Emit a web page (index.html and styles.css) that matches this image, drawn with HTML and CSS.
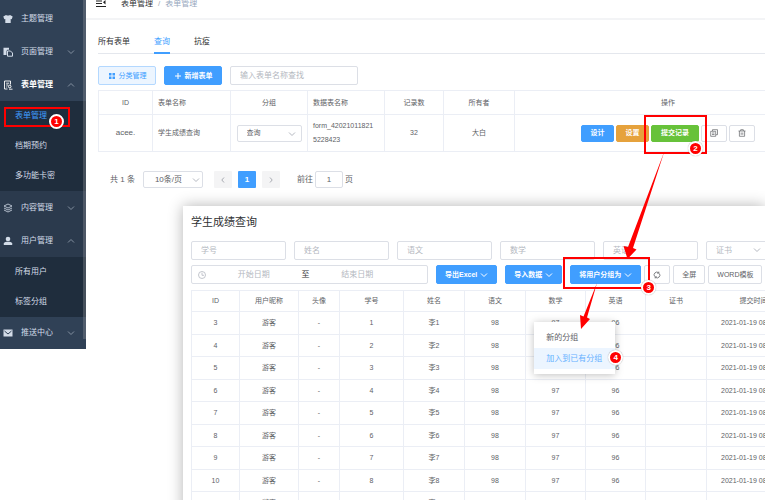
FILE: index.html
```
<!DOCTYPE html>
<html lang="zh-CN">
<head>
  <meta charset="UTF-8" />
  <title>表单管理</title>
  <link rel="stylesheet" href="styles.css">
</head>
<body>

  <!-- shared icons -->
  <svg class="sprite" aria-hidden="true">
    <symbol id="down" viewBox="0 0 8 8"><path d="M1 2.5l3 3 3-3" fill="none" stroke="currentColor"/></symbol>
    <symbol id="up" viewBox="0 0 8 8"><path d="M1 5.5l3-3 3 3" fill="none" stroke="currentColor"/></symbol>
    <symbol id="prev" viewBox="0 0 8 8"><path d="M5 1.5L2.8 4 5 6.5" fill="none" stroke="currentColor"/></symbol>
    <symbol id="next" viewBox="0 0 8 8"><path d="M3 1.5L5.2 4 3 6.5" fill="none" stroke="currentColor"/></symbol>
  </svg>

  <div class="app">
    <nav class="sidebar">
      <a class="item" href="#">
        <svg class="icon" viewBox="0 0 10 10"><path d="M3 1L.3 2.500 1.300 5.200l1-.3V9h5.400V4.900l1 .3 1-2.700L7 1Q5 2.200 3 1z" fill="currentColor"/></svg>
        <span>主题管理</span>
      </a>
      <a class="item" href="#">
        <svg class="icon" viewBox="0 0 10 10"><path d="M.5.8h5.500v2H4.300L3.500 4v4H.5z" fill="currentColor"/><path d="M4.500 4h3l2 2v3.200h-5z" fill="none" stroke="currentColor"/></svg>
        <span>页面管理</span>
        <svg class="arrow"><use href="#down"/></svg>
      </a>
      <a class="item open" href="#">
        <svg class="icon" viewBox="0 0 10 10"><path d="M7.500 4.500V1H1.500v8h3M3.200 3.200h3M3.200 5h2M3.200 7h1M6 9.200h3.500" fill="none" stroke="currentColor" stroke-width=".9"/><circle cx="6.700" cy="6.500" r="1.300" fill="none" stroke="currentColor"/></svg>
        <span>表单管理</span>
        <svg class="arrow"><use href="#up"/></svg>
      </a>
      <div class="submenu">
        <a class="current" href="#">表单管理
          <i class="mark mark-menu"></i><b class="badge badge-menu">1</b>
        </a>
        <a href="#">档期预约</a>
        <a href="#">多功能卡密</a>
      </div>
      <a class="item dim" href="#">
        <svg class="icon" viewBox="0 0 10 10"><path d="M5 1l4 2-4 2-4-2zM1 5l4 2 4-2M1 7l4 2 4-2" fill="none" stroke="currentColor" stroke-width=".8"/></svg>
        <span>内容管理</span>
        <svg class="arrow"><use href="#down"/></svg>
      </a>
      <a class="item dim" href="#">
        <svg class="icon" viewBox="0 0 10 10"><circle cx="5" cy="3" r="2.300" fill="currentColor"/><path d="M.8 9V7.500Q1.200 5.800 3.500 5.700h3Q8.800 5.800 9.200 7.500V9z" fill="currentColor"/></svg>
        <span>用户管理</span>
        <svg class="arrow"><use href="#up"/></svg>
      </a>
      <div class="submenu">
        <a href="#">所有用户</a>
        <a href="#">标签分组</a>
      </div>
      <a class="item" href="#">
        <svg class="icon" viewBox="0 0 10 10"><rect x=".5" y="1.500" width="9" height="7" fill="currentColor"/><path d="M1.500 3L5 6l3.500-3" fill="none" stroke="#304156"/></svg>
        <span>推送中心</span>
        <svg class="arrow"><use href="#down"/></svg>
      </a>
      <div class="scrollbar"></div>
    </nav>

    <main class="main">
      <header class="crumbs">
        <svg class="hamburger" viewBox="0 0 10 8"><path d="M0 1h6M0 3.500h6M0 6.500h10" stroke="#222" fill="none"/><path d="M9.500 0v4.500L7 2.200z" fill="#222"/></svg>
        <span>表单管理</span><i>/</i><a href="#">表单管理</a>
      </header>

      <div class="content">
        <div class="tabs">
          <a href="#">所有表单</a>
          <a class="active" href="#">查询</a>
          <a href="#">抗疫</a>
        </div>

        <div class="toolbar">
          <button class="btn plain wide"><svg class="mini" viewBox="0 0 8 8"><path d="M1 1h2.500v2.500H1zM4.500 1H7v2.500H4.500zM1 4.500h2.500V7H1zM4.500 4.500H7V7H4.500z" fill="currentColor"/></svg>分类管理</button>
          <button class="btn primary wide"><svg class="mini" viewBox="0 0 8 8"><path d="M4 1v6M1 4h6" stroke="currentColor"/></svg>新增表单</button>
          <input class="input search" type="text" placeholder="输入表单名称查找" aria-label="输入表单名称查找">
        </div>

        <table class="table forms">
          <colgroup><col class="w54"><col class="w78"><col class="w77"><col class="w77"><col class="w59"><col class="w71"><col></colgroup>
          <thead>
            <tr><th>ID</th><th class="left">表单名称</th><th>分组</th><th class="left">数据表名称</th><th>记录数</th><th>所有者</th><th>操作</th></tr>
          </thead>
          <tbody>
            <tr>
              <td class="big">acee.</td>
              <td class="left">学生成绩查询</td>
              <td><span class="select group"><select aria-label="分组"><option>查询</option></select><svg><use href="#down"/></svg></span></td>
              <td class="left">form_42021011821<br>5228423</td>
              <td>32</td>
              <td>大白</td>
              <td>
                <div class="actions">
                  <button class="btn primary">设计</button>
                  <button class="btn warning">设置</button>
                  <span class="anchor"><button class="btn success">提交记录</button><i class="mark mark-records"></i><b class="badge badge-records">2</b></span>
                  <button class="btn" aria-label="复制"><svg class="mini" viewBox="0 0 8 8"><path d="M2.500 2V.7h5v5H6M.7 2.300H5.700v5H.7zM2 4h2.500M2 5.500h2.500" fill="none" stroke="currentColor" stroke-width=".7"/></svg></button>
                  <button class="btn" aria-label="删除"><svg class="mini" viewBox="0 0 8 8"><path d="M.5 2h7M2.700 2V.7h2.600V2M1.400 2v5.300h5.200V2M3.200 3.500v2.300M4.800 3.500v2.300" fill="none" stroke="currentColor" stroke-width=".7"/></svg></button>
                </div>
              </td>
            </tr>
          </tbody>
        </table>

        <div class="pager">
          <span>共 1 条</span>
          <span class="select size"><select aria-label="每页条数"><option>10条/页</option></select><svg><use href="#down"/></svg></span>
          <div class="pages">
            <button aria-label="上一页"><svg class="mini"><use href="#prev"/></svg></button>
            <button class="on">1</button>
            <button aria-label="下一页"><svg class="mini"><use href="#next"/></svg></button>
          </div>
          <label class="jump">前往 <input class="input" type="text" value="1"> 页</label>
        </div>
      </div>
    </main>
  </div>

  <section class="dialog">
    <h1>学生成绩查询</h1>
    <div class="filters">
      <input class="input" type="text" placeholder="学号" aria-label="学号">
      <input class="input" type="text" placeholder="姓名" aria-label="姓名">
      <input class="input" type="text" placeholder="语文" aria-label="语文">
      <input class="input" type="text" placeholder="数学" aria-label="数学">
      <input class="input" type="text" placeholder="英语" aria-label="英语">
      <span class="select cert"><select aria-label="证书"><option>证书</option></select><svg><use href="#down"/></svg></span>
    </div>
    <div class="tools">
      <div class="range">
        <svg class="mini" viewBox="0 0 8 8"><circle cx="4" cy="4" r="3.500" fill="none" stroke="currentColor" stroke-width=".8"/><path d="M4 1.800V4.300h2" fill="none" stroke="currentColor" stroke-width=".8"/></svg>
        <input type="text" placeholder="开始日期" aria-label="开始日期">
        <span>至</span>
        <input type="text" placeholder="结束日期" aria-label="结束日期">
      </div>
      <button class="btn primary">导出Excel <svg class="mini"><use href="#down"/></svg></button>
      <button class="btn primary">导入数据 <svg class="mini"><use href="#down"/></svg></button>
      <div class="anchor">
        <button class="btn primary">将用户分组为 <svg class="mini"><use href="#down"/></svg></button>
        <div class="dropdown">
          <a href="#">新的分组</a>
          <a class="hover" href="#">加入到已有分组</a>
          <b class="badge badge-join">4</b>
        </div>
        <i class="mark mark-group"></i><b class="badge badge-group">3</b>
      </div>
      <div class="extras">
        <button class="btn" aria-label="刷新"><svg class="mini" viewBox="0 0 8 8"><path d="M1.600 5.500A2.800 2.800 0 0 1 5.500 1.600M6.400 2.500A2.800 2.800 0 0 1 2.500 6.400M5.800.6v1.600H4.200M2.200 7.400V5.800h1.600" fill="none" stroke="currentColor" stroke-width=".8"/></svg></button>
        <button class="btn">全屏</button>
        <button class="btn">WORD模板</button>
      </div>
    </div>
    <table class="table records">
      <colgroup><col class="w48"><col class="w59"><col class="w41"><col class="w64"><col class="w61"><col class="w61"><col class="w60"><col class="w60"><col class="w61"><col></colgroup>
      <thead>
        <tr><th>ID</th><th>用户昵称</th><th>头像</th><th>学号</th><th>姓名</th><th>语文</th><th>数学</th><th>英语</th><th>证书</th><th>提交时间</th></tr>
      </thead>
      <tbody id="rows"></tbody>
    </table>
  </section>

  <svg class="arrows" viewBox="0 0 765 500" aria-hidden="true">
    <path d="M664.500 151L633 248l3.500 1.500L627.500 259 623.500 246l4.500 1z"/>
    <path d="M597 283L587 317.500l3 1.500L581 329 580 315l3.500 1.500z"/>
  </svg>

  <script>
    const rows = document.getElementById('rows');

    for (let i = 1; i <= 9; i++) {
      const tr = document.createElement('tr');
      const cells = [i + 2, '游客', '-', i, '李' + i, 98, 97, 96, '', '2021-01-19 08:00:00'];
      tr.innerHTML = cells.map(c => `<td>${c}</td>`).join('');
      rows.appendChild(tr);
    }
  </script>

</body>
</html>
```
FILE: styles.css
```
* {
  box-sizing: border-box;
}

body {
  margin: 0;
  height: 100vh;
  overflow: hidden;
  position: relative;
  background: #fff;
  color: #606266;
  font-family: "Liberation Sans", "Noto Sans CJK SC", sans-serif;
  font-size: 8px;
  line-height: 12px;
}

a {
  color: inherit;
  text-decoration: none;
}

i {
  font-style: normal;
}

button, input, select {
  font: inherit;
  color: inherit;
  margin: 0;
}

input::placeholder {
  color: #b4b8c0;
  opacity: 1;
}

.sprite {
  position: absolute;
  width: 0;
  height: 0;
}

.app {
  display: flex;
  align-items: flex-start;
}

/* sidebar */
.sidebar {
  flex: none;
  position: relative;
  width: 86px;
  padding-top: 2px;
  background: #304156;
  color: #d3dce8;
}

.item {
  display: flex;
  align-items: center;
  height: 33px;
  padding: 0 11px 0 3px;
}

.item:last-of-type {
  height: 32px;
}

.item.open {
  color: #fff;
  font-weight: bold;
}

.item.dim {
  background: #2b3a4d;
}

.icon {
  width: 10px;
  height: 10px;
  margin-right: 8px;
}

.arrow {
  width: 8px;
  height: 8px;
  margin-left: auto;
  color: #8390a0;
}

.submenu {
  background: #1f2d3d;
}

.submenu a {
  display: block;
  position: relative;
  padding-left: 15px;
  line-height: 30px;
}

.submenu .current {
  color: #409eff;
}

.scrollbar {
  position: absolute;
  top: 0;
  right: 0;
  bottom: 10px;
  width: 3px;
  background: rgba(144, 147, 153, 0.35);
}

/* page */
.main {
  flex: 1;
  min-width: 0;
  overflow: hidden;
}

.crumbs {
  display: flex;
  height: 20px;
  padding-left: 10px;
  border-bottom: 2px solid #f3f4f6;
  line-height: 8px;
  color: #303133;
}

.crumbs i {
  margin: 0 5px;
  color: #a8abb2;
}

.crumbs a {
  color: #97a8be;
}

.hamburger {
  width: 10px;
  height: 8px;
  margin-right: 15px;
}

.content {
  padding: 12px 0 0 12px;
}

.tabs {
  display: flex;
  gap: 24px;
  height: 22px;
  border-bottom: 1px solid #e4e7ed;
  color: #303133;
}

.tabs a {
  height: 22px;
  line-height: 20px;
}

.tabs .active {
  color: #409eff;
  border-bottom: 2px solid #409eff;
}

.toolbar {
  display: flex;
  gap: 8px;
  margin: 12px 0 5px;
}

.btn {
  display: flex;
  align-items: center;
  justify-content: center;
  gap: 3px;
  height: 19px;
  padding: 0 8px;
  border: 1px solid #dcdfe6;
  border-radius: 2px;
  background: #fff;
  font-size: 7px;
  white-space: nowrap;
}

.wide {
  width: 58px;
}

.plain {
  color: #409eff;
  background: #ecf5ff;
  border-color: #b3d8ff;
}

.primary, .warning, .success {
  color: #fff;
  font-weight: bold;
}

.primary {
  background: #409eff;
  border-color: #409eff;
}

.warning {
  background: #e6a23c;
  border-color: #e6a23c;
}

.success {
  background: #67c23a;
  border-color: #67c23a;
}

.mini {
  flex: none;
  width: 8px;
  height: 8px;
}

.input {
  height: 19px;
  min-width: 0;
  padding: 0 9px;
  border: 1px solid #dcdfe6;
  border-radius: 2px;
  background: #fff;
}

.search {
  width: 128px;
}

/* tables */
.table {
  table-layout: fixed;
  border-spacing: 0;
  border-top: 1px solid #ebeef5;
  border-left: 1px solid #ebeef5;
  font-size: 7px;
  text-align: center;
}

.table th, .table td {
  padding: 0;
  border-right: 1px solid #ebeef5;
  border-bottom: 1px solid #ebeef5;
  white-space: nowrap;
}

.table th {
  font-weight: normal;
}

.table .left {
  padding-left: 5px;
  text-align: left;
}

.table .big {
  font-size: 8px;
}

.forms {
  width: 724px;
}

.forms th {
  height: 24px;
}

.forms td {
  height: 37px;
  line-height: 14px;
}

.w41 { width: 41px; }
.w48 { width: 48px; }
.w54 { width: 54px; }
.w59 { width: 59px; }
.w60 { width: 60px; }
.w61 { width: 61px; }
.w64 { width: 64px; }
.w71 { width: 71px; }
.w77 { width: 77px; }
.w78 { width: 78px; }

.actions {
  display: flex;
  justify-content: center;
  gap: 2px;
}

.actions .btn {
  width: 26px;
  height: 17px;
}

.actions .primary, .actions .warning {
  width: 33px;
}

.actions .success {
  width: 48px;
}

.select {
  display: inline-block;
  position: relative;
  vertical-align: middle;
}

.select select {
  display: block;
  width: 100%;
  height: 17px;
  padding: 0 9px;
  border: 1px solid #dcdfe6;
  border-radius: 2px;
  background: #fff;
  appearance: none;
}

.select svg {
  position: absolute;
  top: 5px;
  right: 6px;
  width: 8px;
  height: 8px;
  color: #b4b8c0;
}

.group {
  width: 65px;
}

/* pagination */
.pager {
  display: flex;
  align-items: center;
  margin: 19px 0 0 12px;
}

.size {
  width: 60px;
  margin: 0 11px 0 8px;
}

.size select {
  padding-left: 11px;
}

.size svg {
  right: 3px;
}

.pages {
  display: flex;
  gap: 6px;
}

.pages button {
  display: flex;
  align-items: center;
  justify-content: center;
  width: 18px;
  height: 17px;
  padding: 0;
  border: 0;
  border-radius: 1px;
  background: #f4f4f5;
  color: #a8abb2;
}

.pages .on {
  background: #409eff;
  color: #fff;
  font-weight: bold;
}

.jump {
  display: flex;
  align-items: center;
  gap: 2px;
  margin-left: 17px;
}

.jump .input {
  width: 28px;
  height: 17px;
  padding: 0;
  text-align: center;
}

/* dialog over the list */
.dialog {
  position: absolute;
  top: 206px;
  left: 183px;
  right: 0;
  padding: 8px 0 0 8px;
  background: #fff;
  box-shadow: 0 0 14px rgba(0, 0, 0, 0.3);
}

.dialog h1 {
  margin: 0 0 11px;
  font-size: 11px;
  font-weight: normal;
  line-height: 16px;
  color: #303133;
}

.filters {
  display: flex;
  gap: 8px;
  margin-bottom: 5px;
}

.filters .input {
  flex: none;
  width: 95px;
}

.cert {
  flex: none;
  width: 61px;
}

.cert select {
  height: 19px;
  color: #b4b8c0;
}

.tools {
  display: flex;
  gap: 8px;
  margin-bottom: 6px;
}

.tools > *, .extras .btn {
  flex: none;
}

.range {
  display: flex;
  align-items: center;
  width: 237px;
  height: 19px;
  padding: 0 22px 0 6px;
  border: 1px solid #dcdfe6;
  border-radius: 2px;
  color: #303133;
}

.range .mini {
  color: #b4b8c0;
}

.range input {
  flex: 1;
  min-width: 0;
  padding: 0;
  border: 0;
  text-align: center;
}

.extras {
  display: flex;
  gap: 3px;
  margin-left: -5px;
}

.records {
  width: 610px;
}

.records th {
  height: 21px;
}

.records td {
  height: 22px;
}

.records tr:nth-child(odd) td {
  height: 23px;
}

.anchor {
  position: relative;
}

.dropdown {
  position: absolute;
  top: 57px;
  left: -36px;
  width: 81px;
  padding: 5px 0;
  background: #fff;
  box-shadow: 0 1px 8px rgba(0, 0, 0, 0.25);
}

.dropdown a {
  display: block;
  padding-left: 12px;
  line-height: 21px;
}

.dropdown .hover {
  background: #ecf5ff;
  color: #66b1ff;
}

/* step marks */
.mark {
  position: absolute;
  border: 2px solid #f00;
  pointer-events: none;
}

.mark-menu {
  top: 6px;
  left: 4px;
  width: 66px;
  height: 20px;
}

.mark-records {
  top: -10px;
  left: -7px;
  width: 63px;
  height: 39px;
}

.mark-group {
  top: -8px;
  left: -7px;
  width: 87px;
  height: 32px;
}

.badge {
  position: absolute;
  width: 15px;
  height: 15px;
  border: 2px solid #fff;
  border-radius: 50%;
  background: #f00;
  box-shadow: 0 0 1px rgba(0, 0, 0, 0.4);
  color: #fff;
  font-size: 8px;
  line-height: 11px;
  text-align: center;
}

.badge-menu {
  top: 13px;
  left: 49px;
}

.badge-records {
  top: 16px;
  left: 37px;
}

.badge-group {
  top: 15px;
  left: 71px;
}

.badge-join {
  top: 28px;
  left: 74px;
}

.mark, .badge {
  z-index: 1;
}

.arrows {
  position: absolute;
  top: 0;
  left: 0;
  width: 765px;
  height: 500px;
  fill: #f00;
  pointer-events: none;
}
```
